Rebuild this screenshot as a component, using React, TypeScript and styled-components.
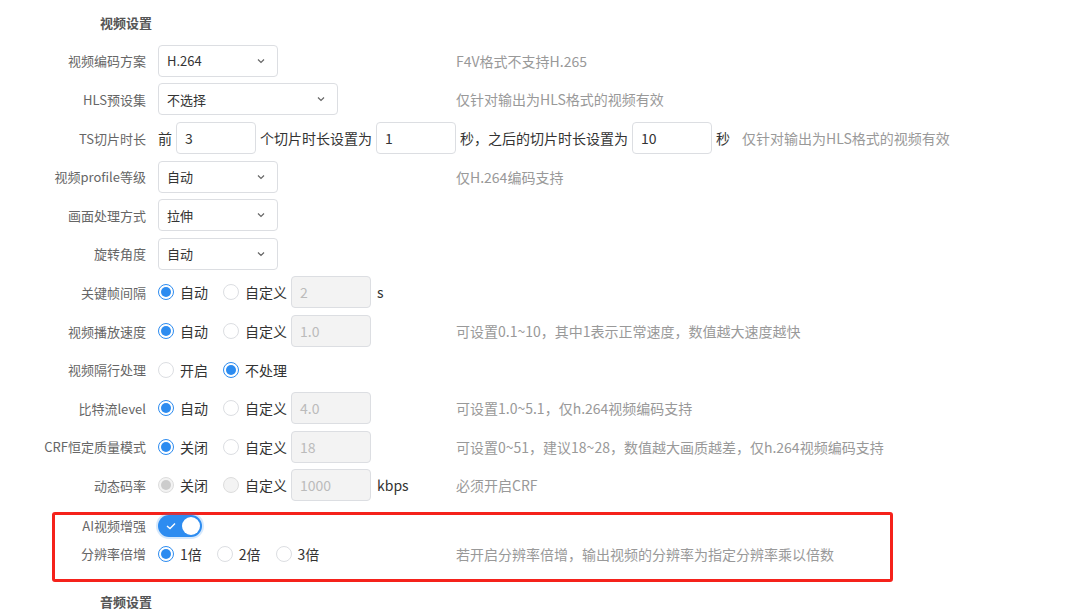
import React from 'react';
import styled, {createGlobalStyle} from 'styled-components';

const GlobalStyle = createGlobalStyle`
  body {
    margin: 0;
    background: #fff;
    font-family: "Noto Sans CJK SC", "Noto Sans", sans-serif;
    overflow: hidden;
  }
`;

const Chevron = () => (
    <svg width="12" height="12" viewBox="0 0 12 12">
        <path d="M3 4.5 L6 7.5 L9 4.5" fill="none" stroke="#666" strokeWidth="1.2"/>
    </svg>
);

type RadioOpt = {label: string; checked?: boolean; disabled?: boolean};

const Radios = ({opts}: {opts: RadioOpt[]}) => (
    <>
        {opts.map((o) => (
            <RadioItem key={o.label}>
                <RadioDot checked={!!o.checked} disabled={!!o.disabled}/>
                {o.label}
            </RadioItem>
        ))}
    </>
);

const App: React.FC = () => (
    <Page>
        <GlobalStyle/>
        <Row>
            <Heading>视频设置</Heading>
        </Row>
        <Row>
            <Label>视频编码方案</Label>
            <Controls><Select>H.264<Chevron/></Select></Controls>
            <Hint>F4V格式不支持H.265</Hint>
        </Row>
        <Row>
            <Label>HLS预设集</Label>
            <Controls><Select wide>不选择<Chevron/></Select></Controls>
            <Hint>仅针对输出为HLS格式的视频有效</Hint>
        </Row>
        <Row>
            <Label>TS切片时长</Label>
            <Controls span>
                前<Input>3</Input>个切片时长设置为<Input>1</Input>秒，之后的切片时长设置为<Input>10</Input>秒
                <InlineHint>仅针对输出为HLS格式的视频有效</InlineHint>
            </Controls>
        </Row>
        <Row>
            <Label>视频profile等级</Label>
            <Controls><Select>自动<Chevron/></Select></Controls>
            <Hint>仅H.264编码支持</Hint>
        </Row>
        <Row>
            <Label>画面处理方式</Label>
            <Controls><Select>拉伸<Chevron/></Select></Controls>
        </Row>
        <Row>
            <Label>旋转角度</Label>
            <Controls><Select>自动<Chevron/></Select></Controls>
        </Row>
        <Row>
            <Label>关键帧间隔</Label>
            <Controls span>
                <Radios opts={[{label: '自动', checked: true}, {label: '自定义'}]}/>
                <Input disabled>2</Input><Unit>s</Unit>
            </Controls>
        </Row>
        <Row>
            <Label>视频播放速度</Label>
            <Controls>
                <Radios opts={[{label: '自动', checked: true}, {label: '自定义'}]}/>
                <Input disabled>1.0</Input>
            </Controls>
            <Hint>可设置0.1~10，其中1表示正常速度，数值越大速度越快</Hint>
        </Row>
        <Row>
            <Label>视频隔行处理</Label>
            <Controls>
                <Radios opts={[{label: '开启'}, {label: '不处理', checked: true}]}/>
            </Controls>
        </Row>
        <Row>
            <Label>比特流level</Label>
            <Controls>
                <Radios opts={[{label: '自动', checked: true}, {label: '自定义'}]}/>
                <Input disabled>4.0</Input>
            </Controls>
            <Hint>可设置1.0~5.1，仅h.264视频编码支持</Hint>
        </Row>
        <Row>
            <Label>CRF恒定质量模式</Label>
            <Controls>
                <Radios opts={[{label: '关闭', checked: true}, {label: '自定义'}]}/>
                <Input disabled>18</Input>
            </Controls>
            <Hint>可设置0~51，建议18~28，数值越大画质越差，仅h.264视频编码支持</Hint>
        </Row>
        <Row>
            <Label>动态码率</Label>
            <Controls>
                <Radios opts={[{label: '关闭', checked: true, disabled: true}, {label: '自定义', disabled: true}]}/>
                <Input disabled>1000</Input><Unit>kbps</Unit>
            </Controls>
            <Hint>必须开启CRF</Hint>
        </Row>
        <Highlight>
            <Row height={20} inBox>
                <Label inBox>AI视频增强</Label>
                <Controls>
                    <Switch>
                        <svg width="10" height="8" viewBox="0 0 10 8">
                            <path d="M1 4 L4 6.5 L9 1.5" fill="none" stroke="#fff" strokeWidth="1.4"/>
                        </svg>
                        <Knob/>
                    </Switch>
                </Controls>
            </Row>
            <Row height={38} inBox>
                <Label inBox>分辨率倍增</Label>
                <Controls>
                    <Radios opts={[{label: '1倍', checked: true}, {label: '2倍'}, {label: '3倍'}]}/>
                </Controls>
                <Hint>若开启分辨率倍增，输出视频的分辨率为指定分辨率乘以倍数</Hint>
            </Row>
        </Highlight>
        <Row>
            <Heading>音频设置</Heading>
        </Row>
    </Page>
);

export default App;

const Page = styled.div`
  padding-top: 3px;
  width: 1068px;
`;

const Row = styled.div<{height?: number; inBox?: boolean}>`
  display: grid;
  grid-template-columns: ${(p) => (p.inBox ? '91px' : '146px')} 286px 1fr;
  column-gap: 12px;
  align-items: center;
  height: ${(p) => p.height ?? 38.6}px;
`;

const Heading = styled.div`
  grid-column: 1 / 2;
  text-align: right;
  font-size: 13px;
  font-weight: 700;
  color: #555;
  padding-right: 0;
  margin-right: -6px;
`;

const Label = styled.div<{inBox?: boolean}>`
  text-align: right;
  font-size: 13px;
  color: #666;
  white-space: nowrap;
`;

const Controls = styled.div<{span?: boolean}>`
  display: flex;
  align-items: center;
  gap: 0;
  font-size: 14px;
  color: #333;
  white-space: nowrap;
  ${(p) => (p.span ? 'grid-column: 2 / 4;' : '')}
`;

const Select = styled.div<{wide?: boolean}>`
  box-sizing: border-box;
  width: ${(p) => (p.wide ? 180 : 120)}px;
  height: 32px;
  border: 1px solid #dcdee2;
  border-radius: 4px;
  display: flex;
  align-items: center;
  justify-content: space-between;
  padding: 0 10px 0 8px;
  font-size: 13px;
  color: #333;
`;

const Input = styled.div<{disabled?: boolean}>`
  box-sizing: border-box;
  width: 80px;
  height: 32px;
  border: 1px solid #dcdee2;
  border-radius: 4px;
  margin: 0 4px;
  padding: 0 8px;
  display: flex;
  align-items: center;
  font-size: 14px;
  color: ${(p) => (p.disabled ? '#bbb' : '#333')};
  background: ${(p) => (p.disabled ? '#f3f3f3' : '#fff')};
  &:first-of-type { }
`;

const InlineHint = styled.span`
  margin-left: 12px;
  color: #999;
  font-size: 14px;
`;

const Unit = styled.span`
  margin-left: 2px;
  font-size: 14px;
  color: #333;
`;

const Hint = styled.div`
  font-size: 14px;
  color: #999;
  white-space: nowrap;
`;

const RadioItem = styled.label`
  display: inline-flex;
  align-items: center;
  gap: 6px;
  margin-right: 15px;
  font-size: 14px;
  color: #333;
  &:last-of-type { margin-right: 0; }
`;

const RadioDot = styled.span<{checked: boolean; disabled: boolean}>`
  box-sizing: border-box;
  width: 16px;
  height: 16px;
  border-radius: 50%;
  border: 1px solid ${(p) => (p.disabled ? '#ddd' : p.checked ? '#2d8cf0' : '#dcdee2')};
  background: ${(p) => (p.disabled ? '#f3f3f3' : '#fff')};
  display: inline-flex;
  align-items: center;
  justify-content: center;
  &::after {
    content: '';
    display: ${(p) => (p.checked ? 'block' : 'none')};
    width: 10px;
    height: 10px;
    border-radius: 50%;
    background: ${(p) => (p.disabled ? '#ccc' : '#2d8cf0')};
  }
`;

const Highlight = styled.div`
  margin: 7px 0 0 52px;
  width: 841px;
  box-sizing: border-box;
  border: 3px solid #f5221b;
  border-radius: 3px;
  padding-bottom: 6px;
`;

const Switch = styled.div`
  box-sizing: border-box;
  width: 44px;
  height: 22px;
  border-radius: 11px;
  background: #2d8cf0;
  box-shadow: 0 0 0 2px rgba(45, 140, 240, 0.2);
  display: flex;
  align-items: center;
  justify-content: space-between;
  padding: 0 2px 0 8px;
`;

const Knob = styled.span`
  width: 18px;
  height: 18px;
  border-radius: 50%;
  background: #fff;
`;
